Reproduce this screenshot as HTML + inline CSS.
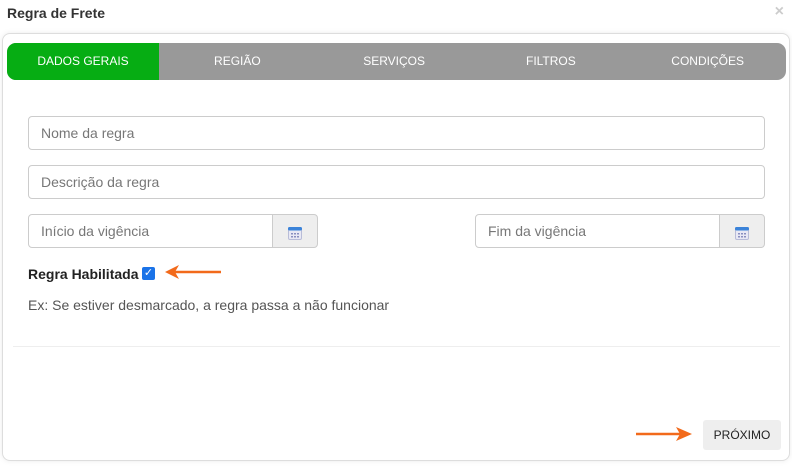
<!DOCTYPE html>
<html><head><style>
body{margin:0;width:792px;height:466px;background:#fff;font-family:"Liberation Sans",sans-serif;position:relative;overflow:hidden}
.a{position:absolute}
.title{left:7px;top:5px;font-size:14px;font-weight:bold;color:#333}
.x{right:8px;top:3px;color:#ccc;font-size:16px;font-weight:bold}
.card{left:2px;top:33px;width:786px;height:426px;border:1px solid #ddd;border-radius:8px;box-shadow:0 0 6px rgba(0,0,0,.08)}
.tabs{left:7px;top:43px;width:779px;height:37px;background:#999;border-radius:9px;overflow:hidden;display:flex}
.tabs div{flex:1;color:#fff;font-size:12px;text-align:center;line-height:37px}
.tabs .on{background:#06ad13;flex:0 0 152px}
.in{border:1px solid #ccc;border-radius:4px;box-sizing:border-box;height:34px;font-size:14px;color:#777;padding-left:12px;line-height:32px}
.add{border:1px solid #ccc;border-radius:0 4px 4px 0;background:#eee;box-sizing:border-box;height:34px;width:46px}
</style></head><body>
<div class="a title">Regra de Frete</div>
<div class="a x">×</div>
<div class="a card"></div>
<div class="a tabs"><div class="on">DADOS GERAIS</div><div>REGIÃO</div><div>SERVIÇOS</div><div>FILTROS</div><div>CONDIÇÕES</div></div>
<div class="a in" style="left:28px;top:116px;width:737px">Nome da regra</div>
<div class="a in" style="left:28px;top:165px;width:737px">Descrição da regra</div>
<div class="a in" style="left:28px;top:214px;width:245px;border-radius:4px 0 0 4px">Início da vigência</div>
<div class="a add" style="left:272px;top:214px"><svg class="a" style="left:15px;top:12px" width="14" height="13"><rect x="0.5" y="0.5" width="13" height="12" rx="1.5" fill="#e8e8f4" stroke="#b8bcd8"/><rect x="0" y="0" width="14" height="3.5" rx="1.5" fill="#3b83d9"/><g fill="#8a8fc0"><rect x="3" y="6" width="2" height="1.5"/><rect x="6" y="6" width="2" height="1.5"/><rect x="9" y="6" width="2" height="1.5"/><rect x="3" y="9" width="2" height="1.5"/><rect x="6" y="9" width="2" height="1.5"/><rect x="9" y="9" width="2" height="1.5"/></g></svg></div>
<div class="a in" style="left:475px;top:214px;width:245px;border-radius:4px 0 0 4px">Fim da vigência</div>
<div class="a add" style="left:719px;top:214px"><svg class="a" style="left:15px;top:12px" width="14" height="13"><rect x="0.5" y="0.5" width="13" height="12" rx="1.5" fill="#e8e8f4" stroke="#b8bcd8"/><rect x="0" y="0" width="14" height="3.5" rx="1.5" fill="#3b83d9"/><g fill="#8a8fc0"><rect x="3" y="6" width="2" height="1.5"/><rect x="6" y="6" width="2" height="1.5"/><rect x="9" y="6" width="2" height="1.5"/><rect x="3" y="9" width="2" height="1.5"/><rect x="6" y="9" width="2" height="1.5"/><rect x="9" y="9" width="2" height="1.5"/></g></svg></div>
<div class="a" style="left:28px;top:266px;font-size:14px;font-weight:bold;color:#222">Regra Habilitada</div>
<div class="a" style="left:142px;top:267px;width:13px;height:13px;background:#1a73e8;border-radius:2px;color:#fff;font-size:11px;line-height:13px;text-align:center">✓</div>
<svg class="a" style="left:163px;top:264px" width="58" height="16"><path d="M58 8H10" stroke="#f26a1b" stroke-width="2.5"/><path d="M2 8L16 1L12 8L16 15Z" fill="#f26a1b"/></svg>
<div class="a" style="left:28px;top:297px;font-size:14px;color:#555">Ex: Se estiver desmarcado, a regra passa a não funcionar</div>
<div class="a" style="left:13px;top:346px;width:767px;height:1px;background:#eee"></div>
<svg class="a" style="left:636px;top:426px" width="58" height="16"><path d="M0 8H48" stroke="#f26a1b" stroke-width="2.5"/><path d="M56 8L40 1L44 8L40 15Z" fill="#f26a1b"/></svg>
<div class="a" style="left:703px;top:420px;width:78px;height:30px;background:#eee;border-radius:3px;font-size:12px;color:#222;text-align:center;line-height:30px">PRÓXIMO</div>
</body></html>
